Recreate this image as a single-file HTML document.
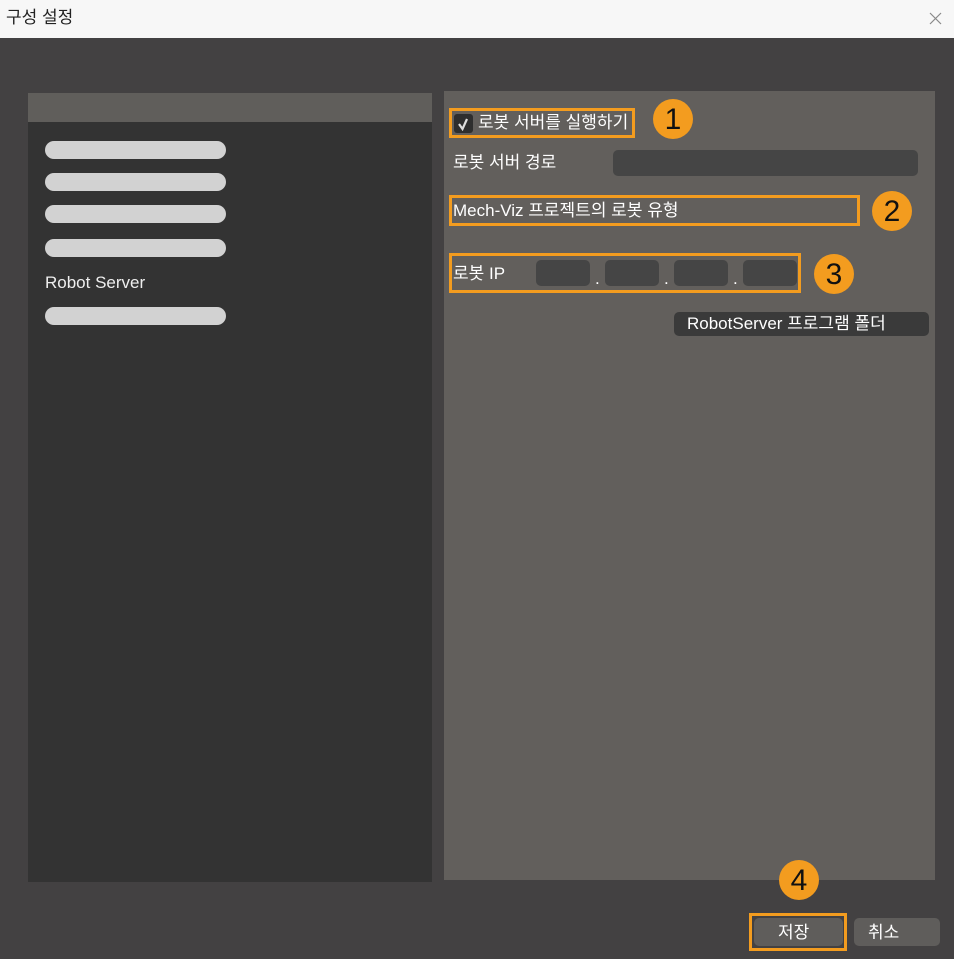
<!DOCTYPE html>
<html><head><meta charset="utf-8"><style>
*{margin:0;padding:0;box-sizing:border-box}
body{width:954px;height:959px;background:#434142;position:relative;overflow:hidden;font-family:"Liberation Sans","Noto Sans CJK KR",sans-serif;color:#fff}
.a{position:absolute}
.pill{position:absolute;left:45px;width:181px;height:18px;border-radius:9px;background:#d2d2d2}
.t{position:absolute;font-size:17px;white-space:nowrap;line-height:20px}
.box{position:absolute;border:3px solid #f39c1f}
.num{position:absolute;width:40px;height:40px;border-radius:50%;background:#f39c1f;color:#111;font-size:30px;text-align:center;line-height:41px}
.in{position:absolute;background:#454545;border-radius:5px}
</style></head><body>
<div class="a" style="left:0;top:0;width:954px;height:38px;background:#f7f7f7"></div>
<div class="t" style="left:6px;top:8px;color:#222;font-size:17px">구성 설정</div>
<svg class="a" style="left:929px;top:12px" width="13" height="13"><path d="M1 1L12 12M12 1L1 12" stroke="#888" stroke-width="1.2"/></svg>

<div class="a" style="left:28px;top:93px;width:404px;height:789px;background:#333"></div>
<div class="a" style="left:28px;top:93px;width:404px;height:29px;background:#605e5b"></div>
<div class="pill" style="top:141px"></div>
<div class="pill" style="top:173px"></div>
<div class="pill" style="top:205px"></div>
<div class="pill" style="top:239px"></div>
<div class="t" style="left:45px;top:273px;color:#eee">Robot Server</div>
<div class="pill" style="top:307px"></div>

<div class="a" style="left:444px;top:91px;width:491px;height:789px;background:#625f5c"></div>
<div class="box" style="left:449px;top:108px;width:186px;height:30px"></div>
<div class="a" style="left:454px;top:114px;width:19px;height:19px;background:#2e2e2e;border-radius:3px"></div>
<svg class="a" style="left:456px;top:116px" width="15" height="15"><path d="M3 8L6.5 13L11 3" stroke="#ddd" stroke-width="2.2" fill="none"/></svg>
<div class="t" style="left:478px;top:113px">로봇 서버를 실행하기</div>
<div class="num" style="left:653px;top:99px">1</div>
<div class="t" style="left:453px;top:153px">로봇 서버 경로</div>
<div class="in" style="left:613px;top:150px;width:305px;height:26px"></div>
<div class="box" style="left:449px;top:195px;width:411px;height:31px"></div>
<div class="t" style="left:453px;top:201px">Mech-Viz 프로젝트의 로봇 유형</div>
<div class="num" style="left:872px;top:191px">2</div>
<div class="box" style="left:449px;top:253px;width:352px;height:40px"></div>
<div class="t" style="left:453px;top:264px">로봇 IP</div>
<div class="in" style="left:536px;top:260px;width:54px;height:26px"></div>
<div class="in" style="left:605px;top:260px;width:54px;height:26px"></div>
<div class="in" style="left:674px;top:260px;width:54px;height:26px"></div>
<div class="in" style="left:743px;top:260px;width:54px;height:26px"></div>
<div class="t" style="left:595px;top:269px">.</div>
<div class="t" style="left:664px;top:269px">.</div>
<div class="t" style="left:733px;top:269px">.</div>
<div class="num" style="left:814px;top:254px">3</div>
<div class="a" style="left:674px;top:312px;width:255px;height:24px;background:#3a3a3a;border-radius:5px"></div>
<div class="t" style="left:687px;top:314px">RobotServer 프로그램 폴더</div>

<div class="num" style="left:779px;top:860px">4</div>
<div class="box" style="left:749px;top:913px;width:98px;height:38px"></div>
<div class="a" style="left:754px;top:918px;width:89px;height:28px;background:#5f5d5b;border-radius:5px"></div>
<div class="t" style="left:778px;top:923px">저장</div>
<div class="a" style="left:854px;top:918px;width:86px;height:28px;background:#5f5d5b;border-radius:5px"></div>
<div class="t" style="left:868px;top:923px">취소</div>
</body></html>
